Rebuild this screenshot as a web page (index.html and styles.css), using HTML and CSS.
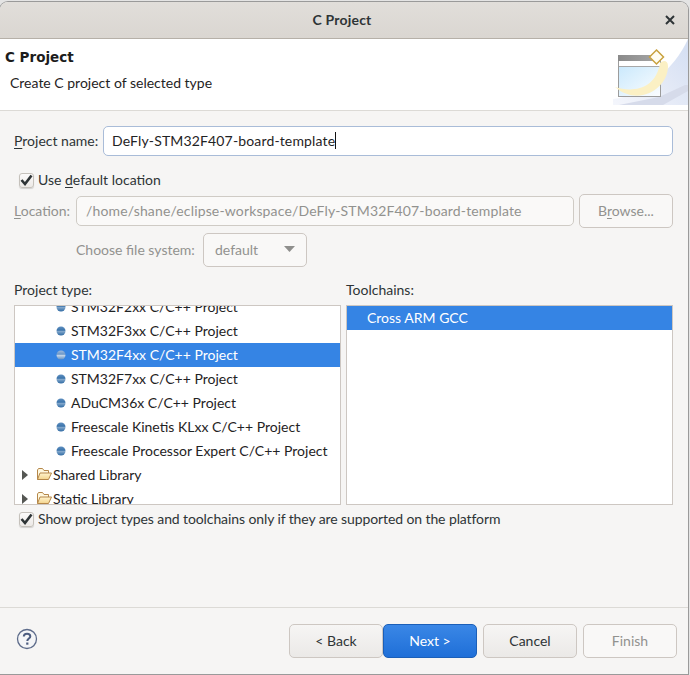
FILE: index.html
```html
<!DOCTYPE html>
<html lang="en">
<head>
<meta charset="utf-8">
<title>C Project</title>
<link rel="stylesheet" href="styles.css">
</head>
<body>
<div class="window">
  <header class="titlebar">
    <span class="title">C Project</span>
    <svg class="close" width="10" height="10" viewBox="0 0 10 10"><path d="M1 1L9 9M9 1L1 9" stroke="#2e3436" stroke-width="2"/></svg>
  </header>
  <section class="banner">
    <div class="banner-text">
      <h1>C Project</h1>
      <p>Create C project of selected type</p>
    </div>
    <svg class="wizard" width="75" height="66" viewBox="0 0 75 66">
      <defs>
        <linearGradient id="bg" x1="0" y1="1" x2="1" y2="0.2"><stop offset="0" stop-color="#f4f6fc"/><stop offset="0.5" stop-color="#e6ebf7"/><stop offset="1" stop-color="#d6e0f3"/></linearGradient>
        <linearGradient id="pane" x1="0" y1="0" x2="1" y2="1"><stop offset="0" stop-color="#cbe9fc"/><stop offset="1" stop-color="#fbfdff"/></linearGradient>
        <linearGradient id="bar" x1="0" y1="0" x2="1" y2="0"><stop offset="0" stop-color="#8a8a8a"/><stop offset="1" stop-color="#a8a8a8"/></linearGradient>
      </defs>
      <path d="M0 66V60C28 58 62 30 75 0V66Z" fill="url(#bg)"/>
      <path d="M6 66L46 58L72 46H75V52L50 66Z" fill="#d6dbea"/>
      <rect x="5.500" y="16.500" width="42" height="41" fill="#fff" stroke="#9c9c9c"/>
      <rect x="5" y="16" width="43" height="6" fill="url(#bar)"/>
      <rect x="6" y="28" width="41" height="29" fill="url(#pane)"/>
      <rect x="6" y="27" width="41" height="1" fill="#a8a8a8"/>
      <path d="M2 48C20 54 43 50 47 24C50 21 55 21 55 27C55 50 25 68 2 48Z" fill="#fbf0c4"/>
      <path d="M43.500 11L50.500 18L43.500 25L36.500 18Z" fill="#fffdf2" stroke="#c9a23f" stroke-width="1.500"/>
    </svg>
  </section>
  <main class="content">
    <div class="row name-row">
      <label class="label name-label"><u>P</u>roject name:</label>
      <div class="input focus">DeFly-STM32F407-board-template<span class="caret"></span></div>
    </div>
    <label class="check default-check">
      <span class="box"><svg width="13" height="12" viewBox="0 0 13 12"><path d="M1.500 6L5 10L11.500 1.500" fill="none" stroke="#2e3436" stroke-width="2.600"/></svg></span>
      <span class="check-text">Use <u>d</u>efault location</span>
    </label>
    <div class="row location-row">
      <label class="label disabled loc-label"><u>L</u>ocation:</label>
      <div class="input readonly">/home/shane/eclipse-workspace/DeFly-STM32F407-board-template</div>
      <button class="btn browse" disabled>B<u>r</u>owse...</button>
    </div>
    <div class="row fs-row">
      <label class="label disabled fs-label">Choose file system:</label>
      <div class="select">default<svg width="11" height="6" viewBox="0 0 11 6"><path d="M0 0H11L5.500 6Z" fill="#8f8f8d"/></svg></div>
    </div>
    <div class="lists">
      <div class="col">
        <div class="col-title">Project type:</div>
        <div class="listbox">
          <ul class="tree">
            <li class="item"><svg class="ball" width="10" height="10"><use href="#orb"/></svg>STM32F2xx C/C++ Project</li>
            <li class="item"><svg class="ball" width="10" height="10"><use href="#orb"/></svg>STM32F3xx C/C++ Project</li>
            <li class="item selected"><svg class="ball" width="10" height="10"><use href="#orb-sel"/></svg>STM32F4xx C/C++ Project</li>
            <li class="item"><svg class="ball" width="10" height="10"><use href="#orb"/></svg>STM32F7xx C/C++ Project</li>
            <li class="item"><svg class="ball" width="10" height="10"><use href="#orb"/></svg>ADuCM36x C/C++ Project</li>
            <li class="item"><svg class="ball" width="10" height="10"><use href="#orb"/></svg>Freescale Kinetis KLxx C/C++ Project</li>
            <li class="item"><svg class="ball" width="10" height="10"><use href="#orb"/></svg>Freescale Processor Expert C/C++ Project</li>
            <li class="group"><svg class="tri" width="6" height="10"><path d="M0 0L6 5L0 10Z" fill="#555753"/></svg><svg class="folder" width="16" height="14"><use href="#fold"/></svg>Shared Library</li>
            <li class="group"><svg class="tri" width="6" height="10"><path d="M0 0L6 5L0 10Z" fill="#555753"/></svg><svg class="folder" width="16" height="14"><use href="#fold"/></svg>Static Library</li>
          </ul>
        </div>
      </div>
      <div class="col">
        <div class="col-title">Toolchains:</div>
        <div class="listbox">
          <div class="tool">Cross ARM GCC</div>
        </div>
      </div>
    </div>
    <label class="check support-check">
      <span class="box"><svg width="13" height="12" viewBox="0 0 13 12"><path d="M1.500 6L5 10L11.500 1.500" fill="none" stroke="#2e3436" stroke-width="2.600"/></svg></span>
      <span class="check-text support-text">Show project types and toolchains only if they are supported on the platform</span>
    </label>
  </main>
  <footer class="footer">
    <svg class="help" width="22" height="22" viewBox="0 0 22 22">
      <circle cx="11" cy="11" r="9.500" fill="#f4f5f7" stroke="#5d6b8a" stroke-width="1.300"/>
      <path d="M7.800 8.600C7.800 6.800 9.200 5.700 11 5.700C12.900 5.700 14.300 6.800 14.300 8.400C14.300 10.500 11.300 10.600 11.300 13" fill="none" stroke="#4d5d80" stroke-width="2"/>
      <rect x="10.200" y="14.500" width="2.200" height="2.200" fill="#4d5d80"/>
    </svg>
    <div class="buttons">
      <div class="nav">
        <button class="btn">&lt; Back</button>
        <button class="btn primary">Next &gt;</button>
      </div>
      <button class="btn">Cancel</button>
      <button class="btn" disabled>Finish</button>
    </div>
  </footer>
</div>
<svg class="defs" width="0" height="0">
  <defs>
    <linearGradient id="orbg" x1="0" y1="0" x2="0" y2="1"><stop offset="0" stop-color="#5f8fc0"/><stop offset="0.42" stop-color="#3b74ab"/><stop offset="0.52" stop-color="#86aacd"/><stop offset="1" stop-color="#2f6aa3"/></linearGradient>
    <linearGradient id="orbs" x1="0" y1="0" x2="0" y2="1"><stop offset="0" stop-color="#9db9dc"/><stop offset="0.42" stop-color="#6a96c8"/><stop offset="0.52" stop-color="#c8d8ea"/><stop offset="1" stop-color="#5f8fc4"/></linearGradient>
    <linearGradient id="foldg" x1="0" y1="0" x2="0" y2="1"><stop offset="0" stop-color="#fff4cf"/><stop offset="1" stop-color="#f4d48c"/></linearGradient>
    <circle id="orb" cx="5" cy="5" r="4.500" fill="url(#orbg)"/>
    <circle id="orb-sel" cx="5" cy="5" r="4.500" fill="url(#orbs)"/>
    <g id="fold">
      <path d="M1.500 12.500V3L2.500 1.500H6.500L8 3.500H12.500V6" fill="#fff8df" stroke="#b5874a"/>
      <path d="M1.500 12.500L4 6H15.500L12.500 12.500Z" fill="url(#foldg)" stroke="#b5874a"/>
    </g>
  </defs>
</svg>
</body>
</html>
```
FILE: styles.css
```css
* { box-sizing: border-box; }
html, body { margin: 0; height: 100%; }
body {
  background:
    repeating-linear-gradient(90deg, #3a3a3a 0 3px, #c9c9c9 3px 8px) 60px 100% / 315px 1px no-repeat,
    repeating-linear-gradient(90deg, #3a3a3a 0 4px, #c9c9c9 4px 9px) 440px 100% / 120px 1px no-repeat,
    #e4e4e4;
  font-family: "Lato", "Noto Sans", sans-serif;
  font-size: 14px;
  color: #2e3436;
  overflow: hidden;
  padding: 2px 2px 1px 0;
}
u { text-underline-offset: 2px; }
.defs { position: absolute; }
.window {
  height: 672px;
  background: #f6f5f4;
  border-radius: 8px 8px 0 0;
  box-shadow: 0 0 0 1px #9a9a9a;
  display: flex;
  flex-direction: column;
}
.titlebar {
  position: relative;
  height: 37px;
  flex: none;
  display: flex;
  align-items: center;
  justify-content: center;
  padding-bottom: 2px;
  background: linear-gradient(#e1deda, #dad6d1);
  border-bottom: 1px solid #b6b0a8;
  border-radius: 8px 8px 0 0;
}
.title { font-weight: 700; margin-right: 4px; letter-spacing: .2px; }
.close { position: absolute; right: 13px; top: 13px; }
.banner {
  height: 72px;
  flex: none;
  display: flex;
  justify-content: space-between;
  background: #fff;
  border-bottom: 1px solid #dcdad6;
}
.banner-text { padding: 10px 0 0 5px; }
.banner h1 {
  margin: 0;
  font: 700 13.500px "DejaVu Sans", sans-serif;
  color: #1c1c1c;
}
.banner p { margin: 9px 0 0 5px; color: #1f2324; }
.wizard { flex: none; }
.content {
  flex: 1;
  padding: 15px 15px 0 14px;
  display: flex;
  flex-direction: column;
}
.row { display: flex; align-items: center; }
.label { white-space: nowrap; flex: none; padding-bottom: 2px; }
.name-label { width: 89px; }
.loc-label { width: 57px; }
.fs-label { width: 127px; }
.disabled { color: #92928f; }
.input {
  flex: 1;
  min-width: 0;
  padding-bottom: 2px;
  border-radius: 5px;
  white-space: nowrap;
  overflow: hidden;
  display: flex;
  align-items: center;
  letter-spacing: .15px;
}
.name-row { height: 30px; }
.focus {
  height: 30px;
  padding-left: 8px;
  background: #fff;
  color: #1f2324;
  border: 1px solid #a9bcd8;
}
.caret { width: 1px; height: 17px; background: #111; }
.check { display: flex; align-items: center; gap: 4px; }
.check-text { padding-bottom: 2px; }
.box {
  width: 15px;
  height: 15px;
  flex: none;
  display: flex;
  align-items: center;
  justify-content: center;
  border: 1px solid #c5c1bb;
  border-radius: 3px;
  background: linear-gradient(#fbfafa, #ece9e6);
  box-shadow: 0 1px 1px rgba(0,0,0,.15);
}
.default-check { margin: 15px 0 0 5px; height: 18px; }
.location-row { margin-top: 5px; height: 34px; gap: 5px; }
.readonly {
  height: 30px;
  padding-left: 9px;
  background: #faf9f8;
  border: 1px solid #cfcbc5;
  color: #92928f;
}
.btn {
  height: 34px;
  width: 94px;
  padding: 0 0 2px;
  flex: none;
  font: inherit;
  color: #2e3436;
  border: 1px solid #cdc7c2;
  border-radius: 5px;
  background: linear-gradient(#f6f5f4, #ebe9e7);
}
.btn:disabled { color: #92928f; background: #f9f8f7; }
.fs-row { margin: 5px 0 0 62px; height: 34px; }
.select {
  width: 104px;
  height: 34px;
  padding: 0 11px 2px;
  display: flex;
  align-items: center;
  justify-content: space-between;
  color: #92928f;
  border: 1px solid #cdc7c2;
  border-radius: 5px;
  background: #f9f8f7;
}
.lists { display: flex; gap: 5px; margin-top: 14px; }
.col { flex: 1; min-width: 0; }
.col-title { height: 24px; line-height: 18px; color: #2e3436; }
.listbox {
  height: 200px;
  overflow: hidden;
  background: #fff;
  border: 1px solid #cdc7c2;
}
.tree { list-style: none; margin: -11px 0 0; padding: 0; }
.item, .group {
  height: 24px;
  padding-bottom: 2px;
  display: flex;
  align-items: center;
  white-space: nowrap;
  color: #1f2324;
}
.item { padding-left: 41px; }
.ball { margin: 2px 5px 0 0; flex: none; }
.group { padding-left: 7px; }
.tri { flex: none; margin: 2px 8px 0 0; }
.folder { flex: none; margin-right: 1px; }
.selected, .tool { background: #3584e4; color: #fff; }
.tool { height: 24px; line-height: 24px; padding-left: 20px; }
.support-check { margin: 5px 0 0 5px; height: 18px; }
.support-text { letter-spacing: -.1px; }
.footer {
  height: 67px;
  flex: none;
  display: flex;
  align-items: center;
  justify-content: space-between;
  padding: 0 11px 0 16px;
  border-top: 1px solid #dcdad6;
}
.help { margin-bottom: 4px; }
.buttons { display: flex; gap: 6px; }
.nav { display: flex; }
.primary {
  color: #fff;
  background: linear-gradient(#3a87e6, #1f6fd8);
  border-color: #1b5fb8;
}
```
